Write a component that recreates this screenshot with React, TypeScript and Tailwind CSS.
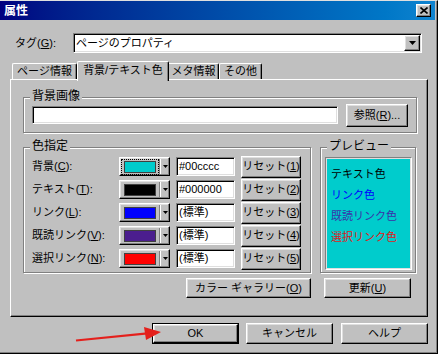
import type { ReactNode } from "react";

const raised =
  "bg-[#c0c0c0] border border-t-white border-l-white border-r-black border-b-black shadow-[inset_-1px_-1px_0_#808080,inset_1px_1px_0_#dfdfdf]";
const sunken =
  "bg-white border border-t-[#808080] border-l-[#808080] border-r-white border-b-white shadow-[inset_1px_1px_0_#000,inset_-1px_-1px_0_#dfdfdf]";

const colorRows = [
  { label: "背景", key: "C", swatch: "bg-[#00cccc]", value: "#00cccc", n: "1", focus: true },
  { label: "テキスト", key: "T", swatch: "bg-black", value: "#000000", n: "2", focus: false },
  { label: "リンク", key: "L", swatch: "bg-[#0000ff]", value: "(標準)", n: "3", focus: false },
  { label: "既読リンク", key: "V", swatch: "bg-[#4b1e8e]", value: "(標準)", n: "4", focus: false },
  { label: "選択リンク", key: "N", swatch: "bg-[#ff0000]", value: "(標準)", n: "5", focus: false },
];

function Arrow({ w = 5, h = 3 }: { w?: number; h?: number }) {
  return (
    <svg width={w} height={h} viewBox={`0 0 ${w} ${h}`}>
      <polygon points={`0,0 ${w},0 ${w / 2},${h}`} fill="#000" />
    </svg>
  );
}

function Group({ label, className, children }: { label: string; className: string; children: ReactNode }) {
  return (
    <div className={`relative border border-[#808080] shadow-[inset_1px_1px_0_#fff,1px_1px_0_#fff] ${className}`}>
      <span className="absolute -top-[9px] left-[6px] px-[2px] bg-[#c0c0c0] leading-[14px] text-[12px]">{label}</span>
      {children}
    </div>
  );
}

function Button({ className, children }: { className: string; children: ReactNode }) {
  return (
    <div className={`${raised} flex items-center justify-center leading-none whitespace-nowrap ${className}`}>
      {children}
    </div>
  );
}

function ColorButton({ swatch, focus }: { swatch: string; focus: boolean }) {
  return (
    <div className={`${raised} w-[51px] h-[19px] flex items-center`}>
      <div
        className={`ml-[1px] px-[2px] py-[1px] border ${focus ? "border-dotted border-black" : "border-transparent"}`}
      >
        <div className={`w-[32px] h-[12px] border border-[#404040] ${swatch}`} />
      </div>
      <div className="w-[1px] h-[15px] bg-[#808080]" />
      <div className="w-[1px] h-[15px] bg-white" />
      <div className="flex-1 flex justify-center">
        <Arrow />
      </div>
    </div>
  );
}

const App = () => {
  return (
    <div className="relative w-[438px] h-[354px] bg-[#c0c0c0] border-t border-t-[#dfdfdf] border-r border-b border-r-black border-b-black shadow-[inset_-1px_-1px_0_#808080] text-[11px] text-black font-['Liberation_Sans','Noto_Sans_CJK_JP',sans-serif] overflow-hidden">
      {/* title bar */}
      <div className="mr-[2px] h-[19px] flex items-center bg-linear-to-r from-[#000080] to-[#1084d0]">
        <span className="pl-[4px] text-white text-[12px] font-bold">属性</span>
        <div className={`${raised} ml-auto mr-[4px] w-[15px] h-[13px] flex items-center justify-center`}>
          <svg width="8" height="7" viewBox="0 0 8 7">
            <path d="M0.5 0.5 L7.5 6.5 M7.5 0.5 L0.5 6.5" stroke="#000" strokeWidth="1.6" />
          </svg>
        </div>
      </div>

      {/* tag */}
      <div className="flex items-center mt-[13px] h-[20px]">
        <span className="w-[73px] pl-[15px]">
          タグ(<u>G</u>):
        </span>
        <div className={`${sunken} w-[349px] h-[20px] flex items-center`}>
          <span className="flex-1 pl-[2px]">ページのプロパティ</span>
          <div className={`${raised} mr-[1px] w-[16px] h-[16px] flex items-center justify-center`}>
            <Arrow w={7} h={4} />
          </div>
        </div>
      </div>

      {/* tabs */}
      <div className="relative z-10 flex items-end h-[18px] mt-[8px] pl-[12px] whitespace-nowrap">
        <div className="w-[65px] h-[16px] flex items-center justify-center border-t border-l border-r border-t-white border-l-white border-r-black rounded-t-[2px] shadow-[inset_-1px_0_0_#808080]">
          ページ情報
        </div>
        <div className="w-[92px] h-[20px] -mb-[2px] pb-[3px] flex items-center justify-center bg-[#c0c0c0] border-t border-l border-r border-t-white border-l-white border-r-black rounded-t-[2px] shadow-[inset_-1px_0_0_#808080]">
          背景/テキスト色
        </div>
        <div className="w-[50px] h-[16px] flex items-center justify-center border-t border-r border-t-white border-r-black rounded-tr-[2px] shadow-[inset_-1px_0_0_#808080]">
          メタ情報
        </div>
        <div className="w-[43px] h-[16px] flex items-center justify-center border-t border-l border-r border-t-white border-l-white border-r-black rounded-t-[2px] shadow-[inset_-1px_0_0_#808080]">
          その他
        </div>
      </div>

      {/* tab panel */}
      <div className="ml-[10px] w-[418px] h-[238px] flex flex-col border border-t-white border-l-white border-r-black border-b-black shadow-[inset_-1px_-1px_0_#808080]">
        <Group label="背景画像" className="mt-[17px] ml-[12px] w-[394px] h-[36px] flex items-center pl-[8px]">
          <div className={`${sunken} w-[306px] h-[18px]`} />
          <Button className="ml-[8px] w-[62px] h-[23px]">
            参照(<u>R</u>)...
          </Button>
        </Group>

        <div className="flex mt-[14px] ml-[12px]">
          <Group label="色指定" className="w-[288px] h-[126px] pt-[7px] pl-[8px] flex flex-col">
            {colorRows.map((row) => (
              <div key={row.key} className="flex items-center h-[23px] whitespace-nowrap">
                <span className="w-[87px]">
                  {row.label}(<u>{row.key}</u>):
                </span>
                <ColorButton swatch={row.swatch} focus={row.focus} />
                <div className={`${sunken} ml-[6px] w-[59px] h-[19px] flex items-center pl-[2px]`}>
                  {row.value}
                </div>
                <Button className="ml-[6px] w-[60px] h-[22px]">
                  リセット(<u>{row.n}</u>)
                </Button>
              </div>
            ))}
          </Group>

          <Group label="プレビュー" className="ml-[9px] w-[96px] h-[126px] pt-[9px] pl-[4px]">
            <div className="w-[87px] h-[113px] bg-[#00cccc] border border-t-[#808080] border-l-[#808080] border-r-white border-b-white shadow-[inset_1px_1px_0_#dfdfdf,inset_-1px_-1px_0_#dfdfdf] pt-[6px] pl-[5px] leading-[21px] whitespace-nowrap">
              <div className="text-black">テキスト色</div>
              <div className="text-[#0000ff]">リンク色</div>
              <div className="text-[#3a32a8]">既読リンク色</div>
              <div className="text-[#e01818]">選択リンク色</div>
            </div>
          </Group>
        </div>

        <div className="flex mt-[5px]">
          <Button className="ml-[175px] w-[125px] h-[20px]">
            カラー ギャラリー(<u>O</u>)
          </Button>
          <Button className="ml-[13px] w-[87px] h-[20px]">
            更新(<u>U</u>)
          </Button>
        </div>
      </div>

      {/* dialog buttons */}
      <div className="flex mt-[6px]">
        <div className="ml-[152px] w-[87px] h-[21px] border border-black">
          <Button className="w-full h-full">OK</Button>
        </div>
        <Button className="ml-[7px] w-[87px] h-[21px]">キャンセル</Button>
        <Button className="ml-[8px] w-[87px] h-[21px]">ヘルプ</Button>
      </div>

      {/* red annotation arrow */}
      <svg className="absolute left-0 top-0 pointer-events-none" width="438" height="354">
        <line x1="76" y1="339.5" x2="150" y2="332.2" stroke="#e4201c" strokeWidth="2.2" />
        <polygon points="144,326 161,331 146,339" fill="#e4201c" />
      </svg>
    </div>
  );
};

export default App;
